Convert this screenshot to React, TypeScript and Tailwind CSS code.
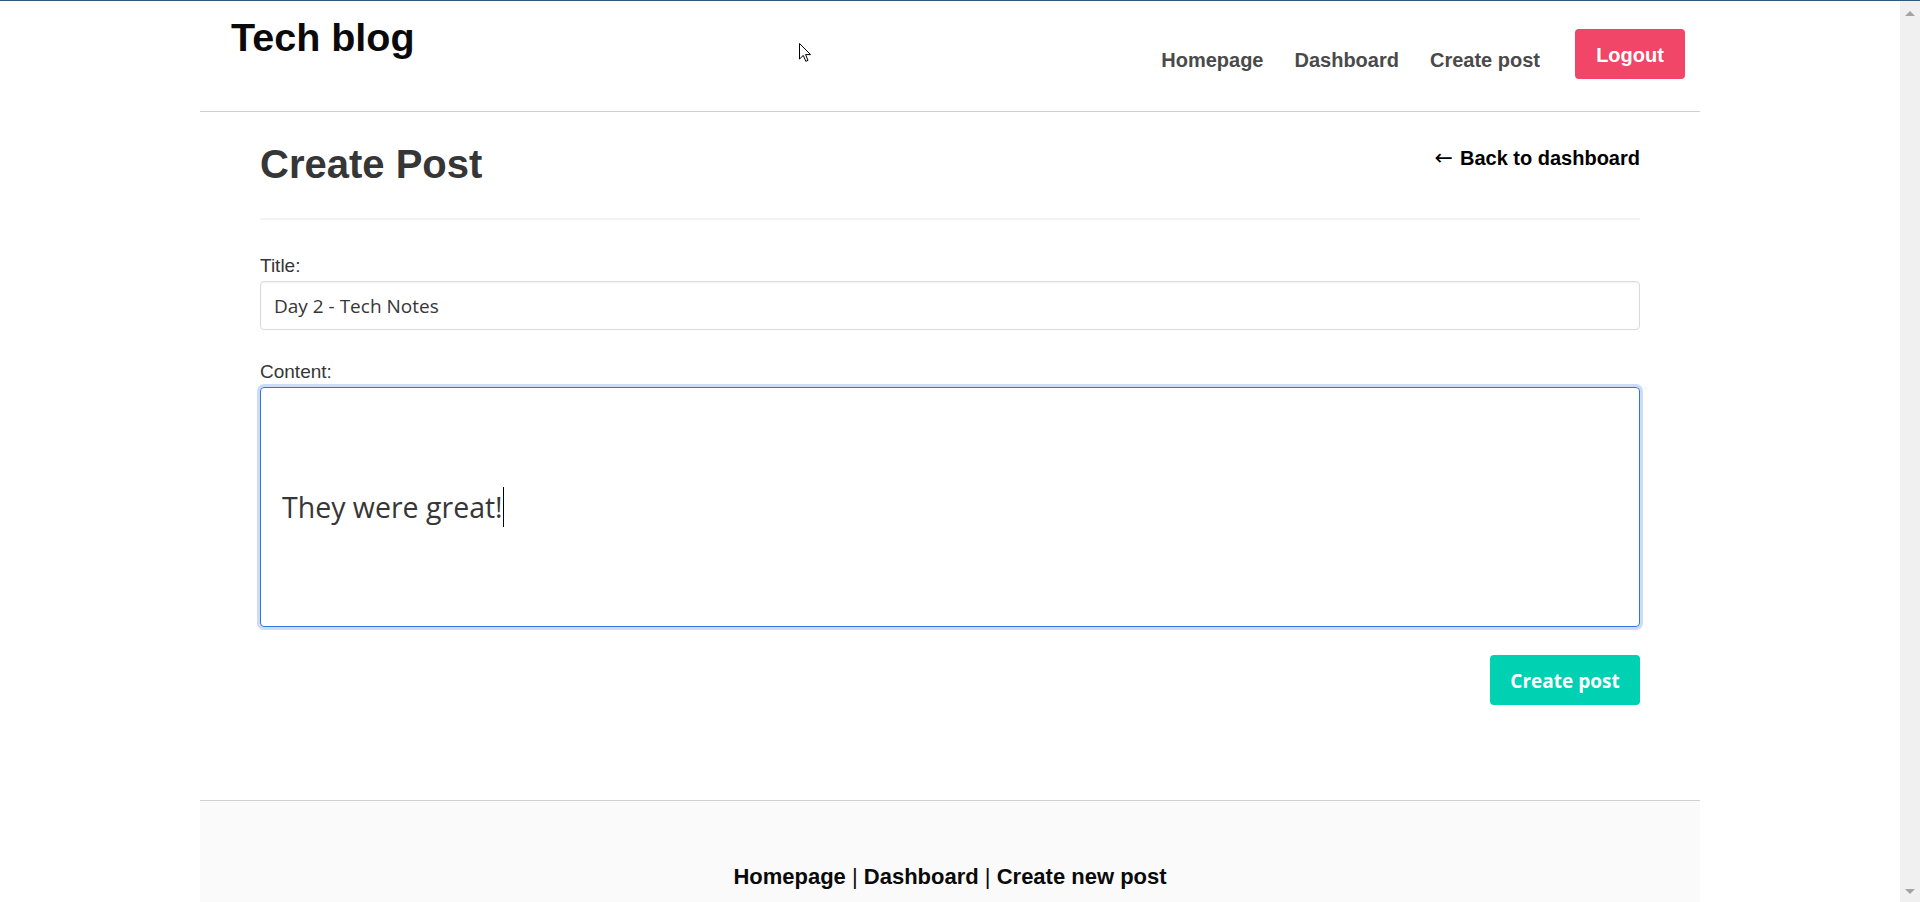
import React from 'react';

function Cursor() {
  return (
    <svg
      className="pointer-events-none absolute left-[799px] top-[42px]"
      width="13"
      height="20"
      viewBox="0 0 13 20"
    >
      <path d="M0.5 0.5 L0.5 16 L4.3 12.4 L6.8 18.3 L9 17.4 L6.6 11.6 L11.6 11.6 Z" fill="#fff" stroke="#000" strokeWidth="1" strokeLinejoin="miter" />
    </svg>
  );
}

function Scrollbar() {
  return (
    <div className="flex w-[20px] flex-col items-center justify-between bg-[#f0f0f0] pb-[8px] pt-[10px]">
      <div className="h-0 w-0 border-x-[5px] border-b-[5px] border-x-transparent border-b-[#a3a3a3]" />
      <div className="h-0 w-0 border-x-[5px] border-t-[5px] border-x-transparent border-t-[#a3a3a3]" />
    </div>
  );
}

export default function App() {
  return (
    <div className="flex h-[902px] w-[1920px] flex-col overflow-hidden bg-white font-['Liberation_Sans',Arial,sans-serif]">
      <div className="h-px w-full bg-[#34557d]" />
      <div className="flex min-h-0 flex-1">
        <div className="relative w-[1900px] overflow-hidden">
          <div className="mx-auto w-[1500px]">
            {/* Top bar */}
            <header className="flex h-[111px] justify-between border-b border-[#d0d0d0]">
              <h1 className="ml-[31px] mt-[17px] text-[39.5px] font-bold leading-none text-[#0a0a0a]">
                Tech blog
              </h1>
              <nav className="mr-[15px] flex items-start pt-[28px]">
                <a href="#" className="mt-[21px] text-[20px] font-bold leading-none text-[#4a4a4a]">
                  Homepage
                </a>
                <a href="#" className="ml-[31px] mt-[21px] text-[20px] font-bold leading-none text-[#4a4a4a]">
                  Dashboard
                </a>
                <a href="#" className="ml-[31px] mt-[21px] text-[20px] font-bold leading-none text-[#4a4a4a]">
                  Create post
                </a>
                <button className="ml-[35px] h-[50px] w-[110px] rounded-[4px] bg-[#f14668] pt-[2px] text-[20px] font-bold leading-none text-white">
                  Logout
                </button>
              </nav>
            </header>

            {/* Form */}
            <main className="px-[60px] pb-[95px]">
              <div className="flex items-start justify-between pt-[32px]">
                <h2 className="text-[40px] font-bold leading-none text-[#363636]">Create Post</h2>
                <a href="#" className="mt-[3px] flex items-center text-[20px] font-bold leading-none text-black">
                  <span className="mr-[7px] font-['DejaVu_Sans',sans-serif] text-[22px] font-normal leading-none">←</span>
                  Back to dashboard
                </a>
              </div>
              <div className="mt-[34px] h-[2px] bg-[#f3f3f3]" />

              <label className="mt-[36px] block text-[19px] leading-none text-[#363636]">Title:</label>
              <input
                type="text"
                defaultValue="Day 2 - Tech Notes"
                className="mt-[6px] block h-[49px] w-full rounded-[4px] border border-[#dbdbdb] px-[13px] font-['Open_Sans',sans-serif] text-[19px] text-[#363636] shadow-[inset_0_1px_2px_rgba(10,10,10,0.05)] outline-none"
              />

              <label className="mt-[32px] block text-[19px] leading-none text-[#363636]">Content:</label>
              <div className="mt-[6px] h-[240px] rounded-[4px] border border-[#3273dc] pl-[21px] pt-[99px] shadow-[0_0_0_3px_rgba(50,115,220,0.25)]">
                <div className="flex items-center">
                  <span className="font-['Open_Sans',sans-serif] text-[28.5px] leading-none text-[#363636]">
                    They were great!
                  </span>
                  <span className="h-[40px] w-px bg-black" />
                </div>
              </div>

              <div className="mt-[28px] flex justify-end">
                <button className="h-[50px] w-[150px] rounded-[4px] bg-[#00d1b2] pt-[3px] font-['Open_Sans',sans-serif] text-[19px] font-bold leading-none text-white">
                  Create post
                </button>
              </div>
            </main>

            {/* Footer */}
            <footer className="h-[200px] border-t border-[#d0d0d0] bg-[#fafafa] pt-[65px] text-center text-[22px] leading-none text-[#0a0a0a]">
              <a href="#" className="font-bold">Homepage</a> | <a href="#" className="font-bold">Dashboard</a> |{' '}
              <a href="#" className="font-bold">Create new post</a>
            </footer>
          </div>
          <Cursor />
        </div>
        <Scrollbar />
      </div>
    </div>
  );
}
